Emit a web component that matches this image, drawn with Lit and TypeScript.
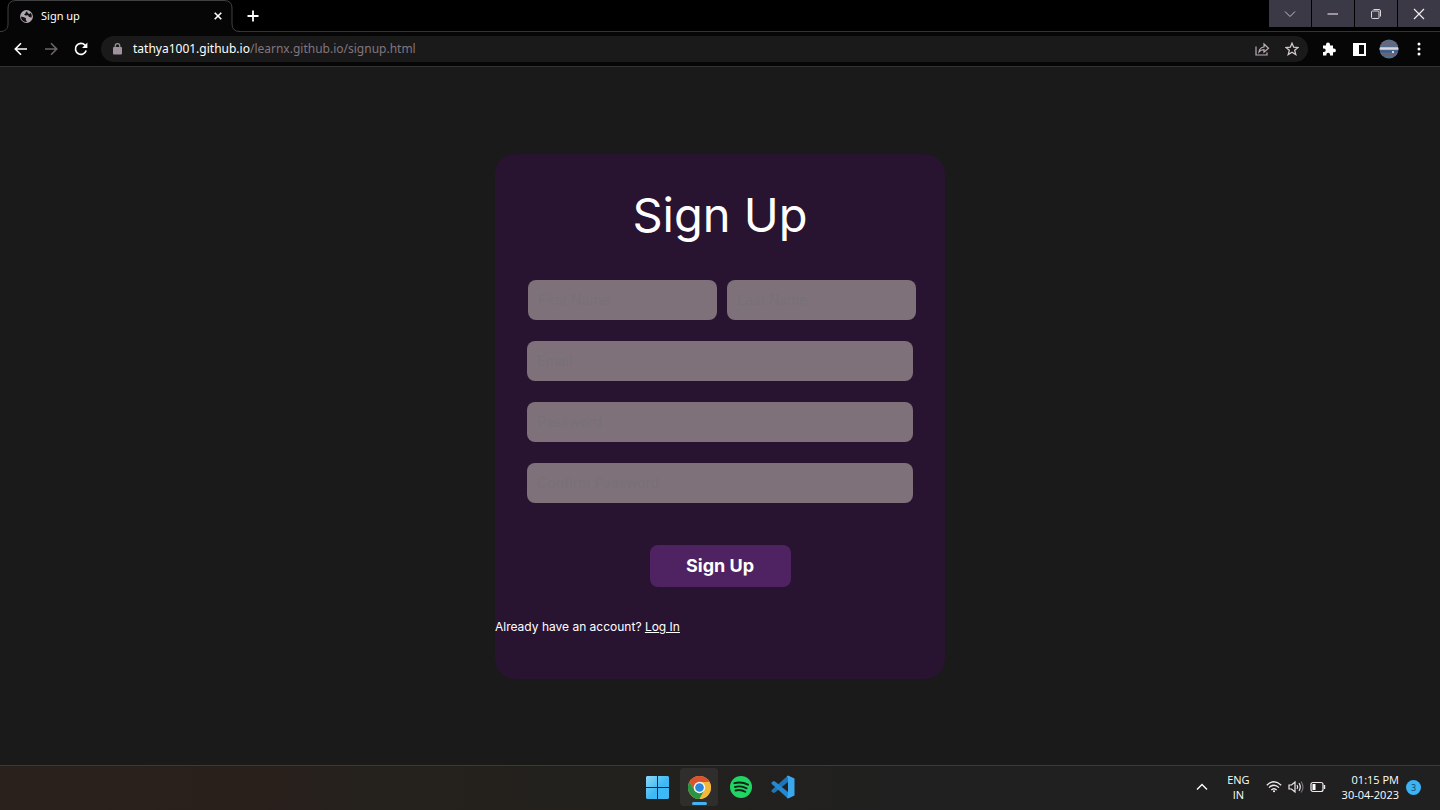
import { LitElement, html, css } from "lit";
import { customElement } from "lit/decorators.js";

@customElement("browser-bar")
class BrowserBar extends LitElement {
  static styles = css`
    :host {
      display: block;
      font-family: "Noto Sans", "Open Sans", sans-serif;
      color: #fff;
    }
    svg { display: block; }
    button {
      display: grid;
      place-items: center;
      margin: 0;
      padding: 0;
      border: 0;
      background: none;
      color: inherit;
      font: inherit;
    }
    .strip {
      display: flex;
      height: 32px;
      background: #000;
      box-shadow: inset 0 -1px #333;
    }
    .tab {
      position: relative;
      display: flex;
      align-items: center;
      width: 240px;
      box-sizing: border-box;
      padding: 0 16px 0 20px;
    }
    .shape { position: absolute; left: 0; top: 0; }
    .globe, .title, .close { position: relative; }
    .title { flex: 1; margin-left: 8px; font-size: 11px; line-height: 16px; }
    .close { width: 12px; height: 12px; }
    .new { width: 26px; height: 32px; }
    .spacer { flex: 1; }
    .window { display: flex; gap: 1px; }
    .window button { width: 42px; height: 27px; background: #3b3946; }
    .tools {
      display: flex;
      align-items: center;
      height: 34px;
      padding: 0 11px;
      background: #060606;
      border-bottom: 1px solid #333;
    }
    .nav { width: 20px; height: 20px; margin-right: 10px; }
    .dim { color: #6e6469; }
    .address {
      display: flex;
      align-items: center;
      flex: 1;
      height: 26px;
      padding: 0 8px 0 12px;
      border-radius: 13px;
      background: #1a1a1a;
    }
    .url {
      flex: 1;
      min-width: 0;
      margin: 0 0 0 11px;
      font-size: 12px;
      line-height: 18px;
      white-space: nowrap;
    }
    .path { color: #82757f; }
    .inside { width: 16px; height: 20px; margin-left: 14px; color: #b9adb6; }
    .actions { display: flex; gap: 10px; margin-left: 11px; }
    .actions button { width: 20px; height: 20px; }
  `;
  render() {
    return html`
      <div class="strip">
        <div class="tab">
          <svg class="shape" width="240" height="32" viewBox="0 0 240 32">
            <path d="M0 31.5C5 31.5 8 29 8 24V8Q8 .5 16 .5H224Q232 .5 232 8V24Q232 31.5 240 31.5V32H0Z" fill="#060606" />
            <path d="M0 31.5C5 31.5 8 29 8 24V8Q8 .5 16 .5H224Q232 .5 232 8V24Q232 31.5 240 31.5" fill="none" stroke="#404040" />
          </svg>
          <svg class="globe" width="13" height="13" viewBox="0 0 13 13">
            <circle cx="6.5" cy="6.5" r="6.4" fill="#b3a8af" />
            <path d="M1 6.5L4 7.2L6 8.2L5.8 9.8L7 12Q3.2 12.4 1.4 9Z M7 1.2Q5 2 5.6 3.2L4 4.4L5.6 5.4L8 5.2L9 7L11.6 7.4Q12.4 5 10.8 3L9 4L7.6 2.8Z" fill="#111" />
          </svg>
          <span class="title">Sign up</span>
          <button class="close" aria-label="Close tab">
            <svg width="8" height="8" viewBox="0 0 8 8"><path d="M.7 .7L7.3 7.3M7.3 .7L.7 7.3" stroke="currentColor" stroke-width="1.6" /></svg>
          </button>
        </div>
        <button class="new" aria-label="New tab">
          <svg width="12" height="12" viewBox="0 0 12 12"><path d="M6 .5V11.5M.5 6H11.5" stroke="currentColor" stroke-width="1.8" /></svg>
        </button>
        <span class="spacer"></span>
        <div class="window">
          <button aria-label="Search tabs"><svg width="12" height="12" viewBox="0 0 12 12"><path d="M1 3.500L6 8.500L11 3.500" fill="none" stroke="#c8c0c6" /></svg></button>
          <button aria-label="Minimize"><svg width="12" height="12" viewBox="0 0 12 12"><path d="M.5 6H11" stroke="#e0d5dd" stroke-width="1.2" /></svg></button>
          <button aria-label="Restore"><svg width="12" height="12" viewBox="0 0 12 12"><rect x="1.5" y="3" width="7.5" height="7.5" rx="1" fill="none" stroke="#ded6dc" /><path d="M3.500 1.500H9Q10.500 1.500 10.500 3V8.500" fill="none" stroke="#ded6dc" /></svg></button>
          <button aria-label="Close window"><svg width="12" height="12" viewBox="0 0 12 12"><path d="M1 1L11 11M11 1L1 11" stroke="#f2eaf0" stroke-width="1.2" /></svg></button>
        </div>
      </div>
      <div class="tools">
        <button class="nav" aria-label="Back"><svg width="14" height="14" viewBox="0 0 14 14"><path d="M13 7H1.500M7 1.300L1.300 7L7 12.700" fill="none" stroke="currentColor" stroke-width="1.6" /></svg></button>
        <button class="nav dim" aria-label="Forward"><svg width="14" height="14" viewBox="0 0 14 14"><path d="M1 7H12.500M7 1.300L12.700 7L7 12.700" fill="none" stroke="currentColor" stroke-width="1.6" /></svg></button>
        <button class="nav" aria-label="Reload"><svg width="14" height="14" viewBox="0 0 14 14"><path d="M12.200 8.600A5.500 5.500 0 1 1 11 3.200L12.400 4.600" fill="none" stroke="currentColor" stroke-width="1.7" /><path d="M13.400 .6V6H8Z" fill="currentColor" /></svg></button>
        <div class="address">
          <svg width="9" height="12" viewBox="0 0 9 12"><rect y="4" width="9" height="7.5" rx="1" fill="#a0939d" /><path d="M2.200 4.500V3A2.300 2.300 0 0 1 6.800 3V4.500" fill="none" stroke="#a0939d" stroke-width="1.2" /></svg>
          <p class="url">tathya1001.github.io<span class="path">/learnx.github.io/signup.html</span></p>
          <button class="inside" aria-label="Share"><svg width="16" height="16" viewBox="0 0 16 16"><path d="M2 5.500V14H13V11.500M5 11Q5.500 6.500 10 6V3L14.500 7.300L10 11.200V8.600Q6.800 8.600 5 11Z" fill="none" stroke="currentColor" stroke-width="1.2" /></svg></button>
          <button class="inside" aria-label="Bookmark"><svg width="14" height="14" viewBox="0 0 14 14"><path d="M7 1.200L8.700 5.200L13 5.500L9.700 8.300L10.800 12.600L7 10.300L3.200 12.600L4.300 8.300L1 5.500L5.300 5.200Z" fill="none" stroke="#d3c8d0" stroke-width="1.3" /></svg></button>
        </div>
        <div class="actions">
          <button aria-label="Extensions"><svg width="14" height="14" viewBox="0 0 14 14"><path d="M1 3.500H4V2.500A2 2 0 0 1 8 2.500V3.500H11V6.500H12A1.900 1.900 0 0 1 12 10.300H11V13.500H8V12.500A1.800 1.800 0 0 0 4.400 12.500V13.500H1V10H2A1.700 1.700 0 0 0 2 6.600H1Z" fill="currentColor" /></svg></button>
          <button aria-label="Side panel"><svg width="13" height="13" viewBox="0 0 13 13"><path d="M0 0H13V13H0ZM6 2V11H11V2Z" fill="currentColor" fill-rule="evenodd" /></svg></button>
          <button aria-label="Profile"><svg width="20" height="20" viewBox="0 0 20 20">
            <defs><clipPath id="face"><circle cx="10" cy="10" r="9.5" /></clipPath></defs>
            <g clip-path="url(#face)"><rect width="20" height="20" fill="#536f8d" /><path d="M0 3H20M0 6H20" stroke="#6f6475" stroke-width="1.5" /><path d="M0 9.500H20" stroke="#d9d2d8" stroke-width="2.5" /><path d="M0 12.500H20" stroke="#365c98" stroke-width="2" /><path d="M0 16H20" stroke="#6d616c" stroke-width="2" /><circle cx="14" cy="13" r="1" fill="#fff" /></g>
          </svg></button>
          <button aria-label="Menu"><svg width="4" height="14" viewBox="0 0 4 14"><circle cx="2" cy="2" r="1.5" fill="currentColor" /><circle cx="2" cy="7" r="1.5" fill="currentColor" /><circle cx="2" cy="12" r="1.5" fill="currentColor" /></svg></button>
        </div>
      </div>
    `;
  }
}

@customElement("signup-card")
class SignupCard extends LitElement {
  static styles = css`
    :host {
      display: block;
      width: 450px;
      font-family: Inter, sans-serif;
      color: #fff;
    }
    .card {
      box-sizing: border-box;
      padding: 32px 0 44px;
      border-radius: 20px;
      background: #281331;
    }
    h1 {
      margin: 0 0 36px;
      font-size: 47px;
      font-weight: 400;
      line-height: 58px;
      text-align: center;
    }
    form { display: grid; gap: 21px; padding: 0 32px; }
    .names {
      display: grid;
      grid-template-columns: 1fr 1fr;
      gap: 10px;
      margin: 0 -3px 0 1px;
    }
    input {
      box-sizing: border-box;
      width: 100%;
      height: 40px;
      margin: 0;
      padding: 0 10px;
      border: 0;
      border-radius: 8px;
      background: #7e7179;
      color: #fff;
      font: 14px Inter, sans-serif;
    }
    input::placeholder { color: #777176; opacity: 1; }
    button {
      justify-self: center;
      width: 141px;
      height: 42px;
      margin-top: 21px;
      padding: 0;
      border: 0;
      border-radius: 8px;
      background: #4f2361;
      color: #fff;
      font: 700 18px Inter, sans-serif;
    }
    p { margin: 32px 0 0; font-size: 12px; line-height: 16px; }
    a { color: inherit; }
  `;
  render() {
    return html`
      <div class="card">
        <h1>Sign Up</h1>
        <form @submit=${(e: Event) => e.preventDefault()}>
          <div class="names">
            <input type="text" placeholder="First Name" aria-label="First Name" />
            <input type="text" placeholder="Last Name" aria-label="Last Name" />
          </div>
          <input type="email" placeholder="Email" aria-label="Email" />
          <input type="password" placeholder="Password" aria-label="Password" />
          <input type="password" placeholder="Confirm Password" aria-label="Confirm Password" />
          <button type="submit">Sign Up</button>
        </form>
        <p>Already have an account? <a href="#login">Log In</a></p>
      </div>
    `;
  }
}

@customElement("task-bar")
class TaskBar extends LitElement {
  static styles = css`
    :host {
      display: block;
      font-family: "Open Sans", "Noto Sans", sans-serif;
      font-size: 11px;
      line-height: 15px;
      color: #fff;
    }
    svg { display: block; }
    .bar {
      display: grid;
      grid-template-columns: 1fr auto 1fr;
      align-items: center;
      box-sizing: border-box;
      height: 45px;
      padding-bottom: 2px;
      border-top: 1px solid #3a3a39;
      background: linear-gradient(90deg, #2a201c 0%, #291f1b 18%, #25211d 25%, #23211d 45%, #202020 62%, #202020 100%);
    }
    .apps { display: flex; grid-column: 2; gap: 4px; }
    button {
      display: grid;
      place-items: center;
      margin: 0;
      padding: 0;
      border: 0;
      background: none;
      color: inherit;
      font: inherit;
    }
    .app { position: relative; width: 38px; height: 38px; border-radius: 4px; }
    .active { background: #302e2c; }
    .active::after {
      content: "";
      position: absolute;
      left: 12px;
      bottom: 1px;
      width: 15px;
      height: 3px;
      border-radius: 2px;
      background: #42b4f4;
    }
    .tray {
      display: flex;
      justify-content: flex-end;
      align-items: center;
      padding-right: 19px;
    }
    .lang { margin: 0 16px 0 19px; text-align: center; }
    .status { display: flex; align-items: center; gap: 6px; }
    .clock { margin: 0 7px 0 16px; text-align: right; }
    .badge {
      display: grid;
      place-items: center;
      width: 15px;
      height: 15px;
      border-radius: 50%;
      background: #3bb3f5;
      color: #17415a;
      font-size: 9px;
    }
  `;
  render() {
    return html`
      <div class="bar">
        <div class="apps">
          <button class="app" aria-label="Start"><svg width="23" height="23" viewBox="0 0 23 23">
            <defs><linearGradient id="win" x2="1" y2="1"><stop stop-color="#8ed8f6" /><stop offset=".55" stop-color="#3db9f5" /></linearGradient></defs>
            <path d="M1 0H11V11H0V1ZM12 0H22L23 1V11H12ZM0 12H11V23H1L0 22ZM12 12H23V22L22 23H12Z" fill="url(#win)" /></svg></button>
          <button class="app active" aria-label="Chrome"><svg width="23" height="23" viewBox="0 0 24 24">
            <circle cx="12" cy="12" r="12" fill="#f3b83a" />
            <path d="M1.600 6A12 12 0 0 1 22.400 6L12 6.800L6.800 15Z" fill="#d9532f" />
            <path d="M1.600 6L6.800 15L12 18L17.200 15L12 24A12 12 0 0 1 1.600 6Z" fill="#2a9446" />
            <path d="M12 6.500H22.600A12 12 0 0 1 12 24L17.500 14Z" fill="#f3b83a" />
            <circle cx="12" cy="12" r="6" fill="#f5f5f5" /><circle cx="12" cy="12" r="4.5" fill="#2b87dc" /></svg></button>
          <button class="app" aria-label="Spotify"><svg width="22" height="22" viewBox="0 0 22 22">
            <circle cx="11" cy="11" r="11" fill="#20d564" />
            <path d="M4.300 7.200Q11.500 5.200 18 8.700M5 11Q11 9.300 16.600 12.300M5.500 14.500Q10.800 13.200 15.300 15.800" fill="none" stroke="#102417" stroke-width="1.9" stroke-linecap="round" /></svg></button>
          <button class="app" aria-label="Visual Studio Code"><svg width="24" height="24" viewBox="0 0 24 24">
            <path d="M17 1V7L4 17.500L2.500 18L.5 16.500V15.200L17 .5Z" fill="#1f75b8" />
            <path d="M17 23V17L4 6.500L2.500 6L.5 7.500V8.800L17 23.500Z" fill="#2389d2" />
            <path d="M17 .5L23.500 3.500V20.500L17 23.500L15.800 22.500L17 21V3L15.800 1.500Z" fill="#3ba8ee" /></svg></button>
        </div>
        <div class="tray">
          <button aria-label="Show hidden icons"><svg width="12" height="8" viewBox="0 0 12 8"><path d="M1 6.500L6 1.500L11 6.500" fill="none" stroke="currentColor" stroke-width="1.4" /></svg></button>
          <div class="lang">ENG<br />IN</div>
          <div class="status">
            <svg width="16" height="14" viewBox="0 0 16 14" fill="none" stroke="#f0e9ee" stroke-width="1.3"><path d="M.8 5.200Q8 -1.600 15.200 5.200M3 7.600Q8 2.800 13 7.600M5.300 10Q8 7.400 10.700 10" /><circle cx="8" cy="11.3" r="1" fill="#fff" stroke="none" /></svg>
            <svg width="16" height="14" viewBox="0 0 16 14" fill="none" stroke="#eee7ec" stroke-width="1.2"><path d="M1 5H3.500L7 2V12L3.500 9H1Z M9 5Q10.500 7 9 9M11 3.200Q13.600 7 11 10.800" /><path d="M13 1.500Q17 7 13 12.500" stroke="#77717a" /></svg>
            <svg width="16" height="12" viewBox="0 0 16 12"><rect x="1" y="1.5" width="12" height="9" rx="2" fill="none" stroke="#f1e9ef" stroke-width="1.2" /><rect x="2.5" y="3" width="3" height="6" fill="#fff" /><path d="M14.500 4V8" stroke="#f1e9ef" stroke-width="1.4" /></svg>
          </div>
          <div class="clock">01:15 PM<br />30-04-2023</div>
          <span class="badge">3</span>
        </div>
      </div>
    `;
  }
}

@customElement("app-root")
class AppRoot extends LitElement {
  static styles = css`
    :host {
      display: grid;
      grid-template-rows: auto 1fr auto;
      min-height: 100vh;
      background: #1a1a1a;
    }
    main { display: grid; place-items: center; }
  `;
  render() {
    return html`
      <browser-bar></browser-bar>
      <main><signup-card></signup-card></main>
      <task-bar></task-bar>
    `;
  }
}
